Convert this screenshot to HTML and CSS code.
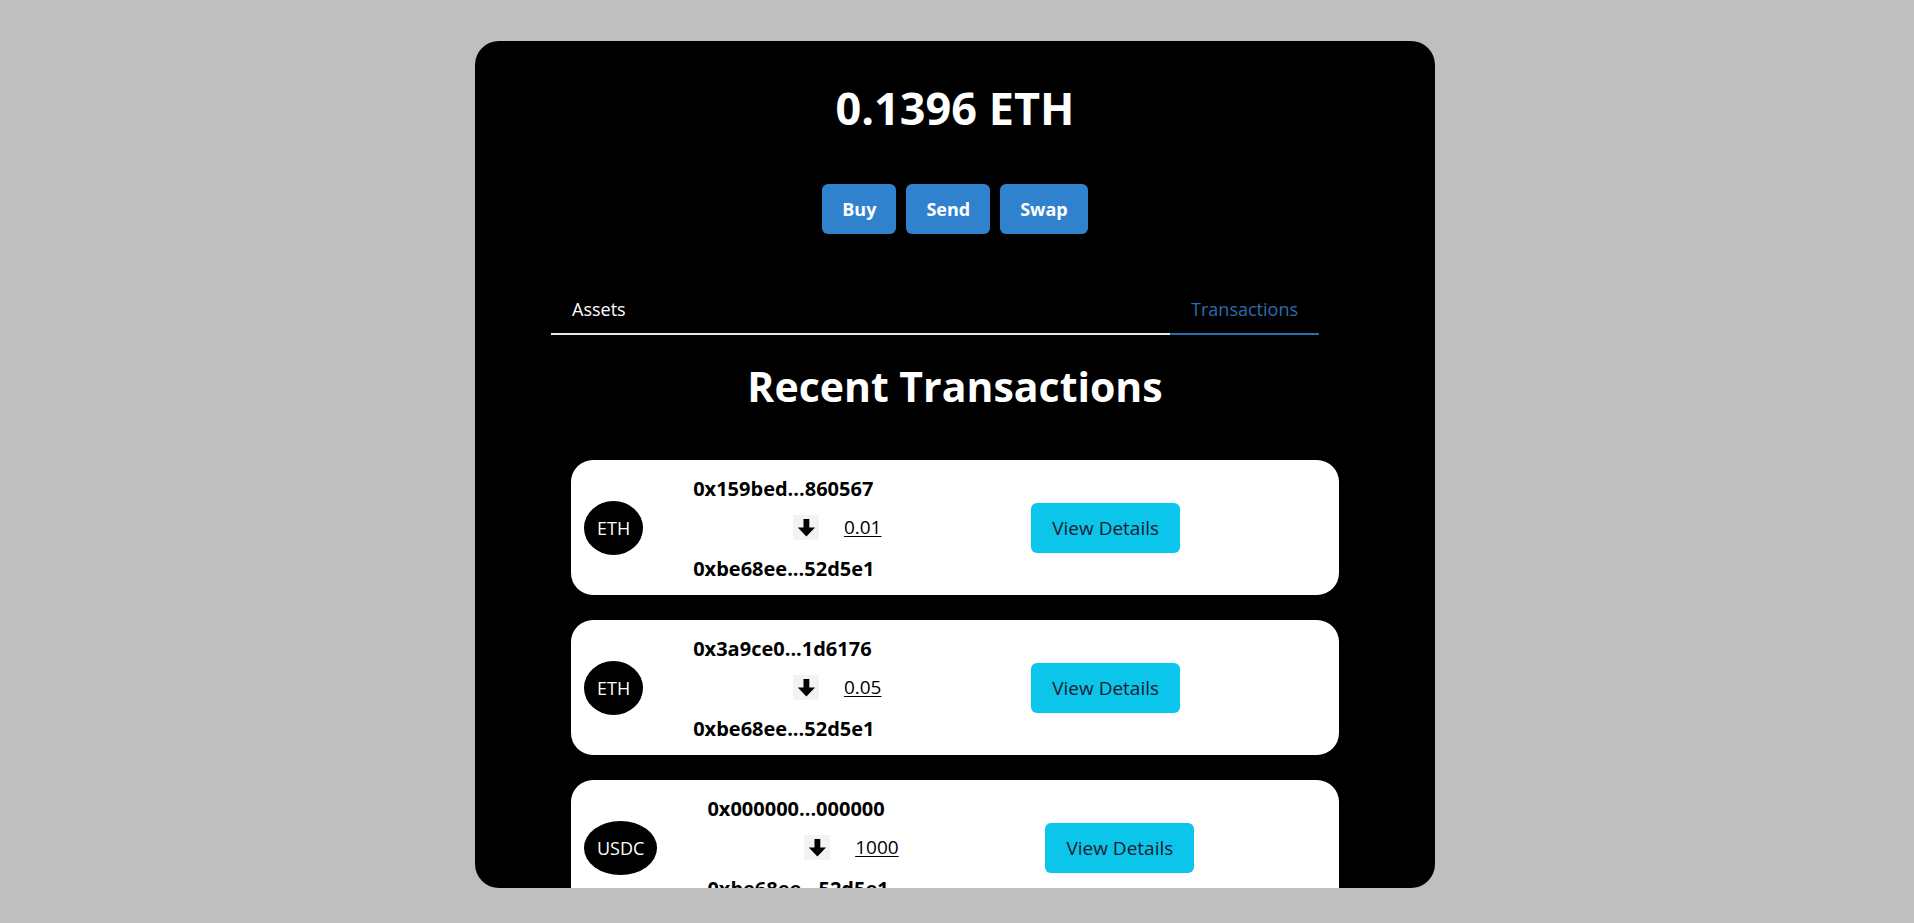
FILE: index.html
```html
<!DOCTYPE html>
<html lang="en">
<head>
<meta charset="utf-8">
<title>Wallet</title>
<link rel="stylesheet" href="styles.css">
</head>
<body>
<div class="page">
  <main class="wallet">
    <h1 class="balance">0.1396 ETH</h1>
    <div class="actions">
      <button class="action-btn">Buy</button>
      <button class="action-btn">Send</button>
      <button class="action-btn">Swap</button>
    </div>
    <div class="tablist">
      <button class="tab">Assets</button>
      <button class="tab tab-selected">Transactions</button>
    </div>
    <section class="panel">
      <h2 class="panel-title">Recent Transactions</h2>
      <div class="tx-card">
        <div class="token">ETH</div>
        <div class="tx-info">
          <div class="addr">0x159bed...860567</div>
          <div class="tx-mid">
            <span class="arrow-box"><svg width="26" height="25" viewBox="0 0 26 25"><path d="M10.5 4H16.3V12.6H22L13.4 21.6L4.8 12.6H10.5Z" fill="#000"/></svg></span>
            <a class="amount">0.01</a>
          </div>
          <div class="addr">0xbe68ee...52d5e1</div>
        </div>
        <button class="details-btn">View Details</button>
      </div>
      <div class="tx-card">
        <div class="token">ETH</div>
        <div class="tx-info">
          <div class="addr">0x3a9ce0...1d6176</div>
          <div class="tx-mid">
            <span class="arrow-box"><svg width="26" height="25" viewBox="0 0 26 25"><path d="M10.5 4H16.3V12.6H22L13.4 21.6L4.8 12.6H10.5Z" fill="#000"/></svg></span>
            <a class="amount">0.05</a>
          </div>
          <div class="addr">0xbe68ee...52d5e1</div>
        </div>
        <button class="details-btn">View Details</button>
      </div>
      <div class="tx-card">
        <div class="token">USDC</div>
        <div class="tx-info">
          <div class="addr">0x000000...000000</div>
          <div class="tx-mid">
            <span class="arrow-box"><svg width="26" height="25" viewBox="0 0 26 25"><path d="M10.5 4H16.3V12.6H22L13.4 21.6L4.8 12.6H10.5Z" fill="#000"/></svg></span>
            <a class="amount">1000</a>
          </div>
          <div class="addr">0xbe68ee...52d5e1</div>
        </div>
        <button class="details-btn">View Details</button>
      </div>
    </section>
  </main>
</div>
</body>
</html>
```
FILE: styles.css
```css
* {
  box-sizing: border-box;
}

html, body {
  margin: 0;
  padding: 0;
  background: #bfbfbf;
  font-family: "Open Sans", "Noto Sans", sans-serif;
}

.page {
  display: flex;
  justify-content: center;
  padding-top: 41px;
  padding-right: 4px;
  height: 923px;
  overflow: hidden;
}

.wallet {
  width: 960px;
  height: 847px;
  background: #000;
  border-radius: 24px;
  overflow: hidden;
  padding-top: 40px;
  display: flex;
  flex-direction: column;
}

.balance {
  margin: 0;
  font-size: 45px;
  line-height: 54px;
  font-weight: 700;
  color: #fff;
  text-align: center;
}

.actions {
  display: flex;
  justify-content: center;
  gap: 10px;
  margin-top: 49px;
}

.action-btn {
  height: 50px;
  padding: 0 20px;
  border: none;
  border-radius: 6px;
  background: #3182ce;
  color: #fff;
  font-family: inherit;
  font-size: 18px;
  font-weight: 700;
}

.tablist {
  display: flex;
  justify-content: space-between;
  width: 768px;
  margin: 50px 0 0 76px;
  border-bottom: 2px solid #e8e8e8;
}

.tab {
  background: none;
  border: none;
  border-bottom: 2px solid transparent;
  margin-bottom: -2px;
  padding: 12px 21px 10px;
  font-family: inherit;
  font-size: 18px;
  line-height: 27px;
  color: #fff;
}

.tab-selected {
  color: #2b6cb0;
  border-bottom-color: #2b6cb0;
}

.panel {
  display: flex;
  flex-direction: column;
  align-items: center;
}

.panel-title {
  margin: 26px 0 49px;
  font-size: 41px;
  line-height: 50px;
  font-weight: 700;
  color: #fff;
}

.tx-card {
  flex: none;
  display: flex;
  align-items: center;
  width: 768px;
  height: 135px;
  margin-bottom: 25px;
  padding-left: 13px;
  background: #fff;
  border-radius: 22px;
}

.token {
  height: 54px;
  padding: 0 13px;
  border-radius: 50%;
  background: #000;
  color: #fff;
  font-size: 18px;
  line-height: 54px;
}

.tx-info {
  width: 288px;
  margin-left: 50px;
  padding-top: 2px;
  display: flex;
  flex-direction: column;
}

.addr {
  font-size: 20px;
  font-weight: 700;
  line-height: 27px;
  color: #000;
}

.tx-mid {
  display: flex;
  justify-content: center;
  align-items: flex-start;
  gap: 25px;
  height: 25px;
  margin: 13px 0 15px;
}

.arrow-box {
  display: block;
  width: 26px;
  height: 25px;
  background: #f3f3f3;
}

.arrow-box svg {
  display: block;
}

.amount {
  font-size: 19px;
  line-height: 25px;
  color: #000;
  text-decoration: underline;
  text-underline-offset: 2px;
}

.details-btn {
  margin-left: 50px;
  height: 50px;
  padding: 0 21px;
  border: none;
  border-radius: 6px;
  background: #0bc5ea;
  color: #1a202c;
  font-family: inherit;
  font-size: 19px;
  font-weight: 500;
}
```
